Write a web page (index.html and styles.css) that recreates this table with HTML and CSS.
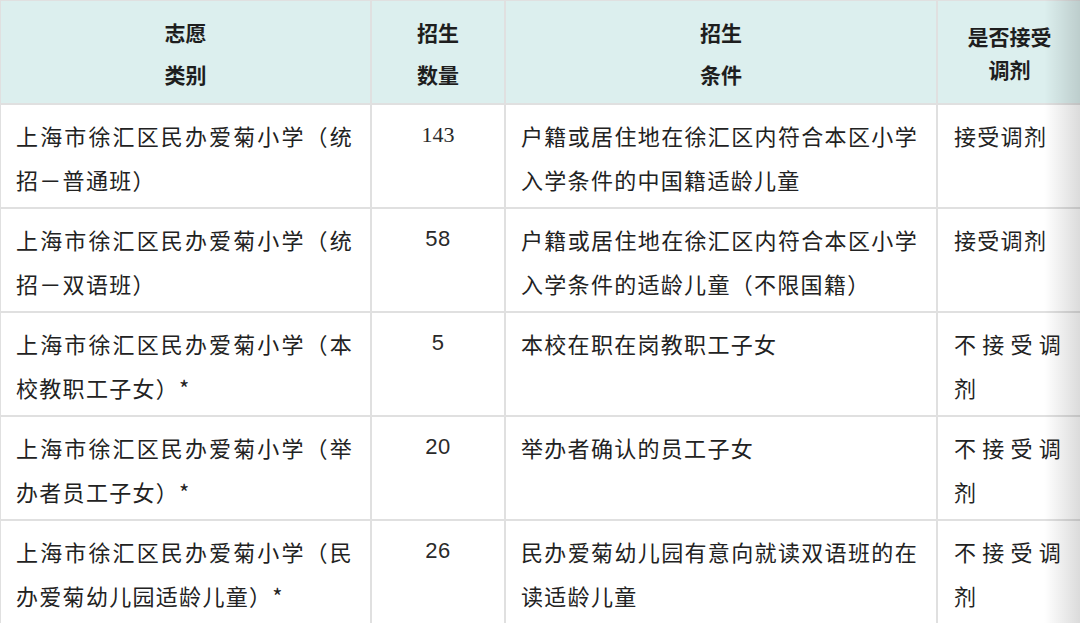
FILE: index.html
```html
<!DOCTYPE html>
<html lang="zh-CN">
<head>
<meta charset="utf-8">
<link rel="stylesheet" href="styles.css">
</head>
<body>
<div class="wrap">
  <table class="quota">
    <colgroup>
      <col class="c1"><col class="c2"><col class="c3"><col class="c4">
    </colgroup>
    <thead>
      <tr>
        <th>志愿<br>类别</th>
        <th>招生<br>数量</th>
        <th>招生<br>条件</th>
        <th class="narrow">是否接受<br>调剂</th>
      </tr>
    </thead>
    <tbody>
      <tr>
        <td>上海市徐汇区民办爱菊小学（统招－普通班）</td>
        <td class="num serif">143</td>
        <td>户籍或居住地在徐汇区内符合本区小学入学条件的中国籍适龄儿童</td>
        <td>接受调剂</td>
      </tr>
      <tr>
        <td>上海市徐汇区民办爱菊小学（统招－双语班）</td>
        <td class="num">58</td>
        <td>户籍或居住地在徐汇区内符合本区小学入学条件的适龄儿童（不限国籍）</td>
        <td>接受调剂</td>
      </tr>
      <tr>
        <td>上海市徐汇区民办爱菊小学（本校教职工子女）*</td>
        <td class="num">5</td>
        <td>本校在职在岗教职工子女</td>
        <td>不接受调剂</td>
      </tr>
      <tr>
        <td>上海市徐汇区民办爱菊小学（举办者员工子女）*</td>
        <td class="num">20</td>
        <td>举办者确认的员工子女</td>
        <td>不接受调剂</td>
      </tr>
      <tr>
        <td>上海市徐汇区民办爱菊小学（民办爱菊幼儿园适龄儿童）*</td>
        <td class="num">26</td>
        <td>民办爱菊幼儿园有意向就读双语班的在读适龄儿童</td>
        <td>不接受调剂</td>
      </tr>
    </tbody>
  </table>
</div>
</body>
</html>
```

FILE: styles.css
```css
html, body {
  margin: 0;
  padding: 0;
  background: #ffffff;
  overflow: hidden;
}
.wrap {
  position: relative;
  width: 1080px;
  height: 623px;
  overflow: hidden;
}
.wrap::after {
  content: "";
  position: absolute;
  top: 0;
  right: 0;
  width: 36px;
  height: 100%;
  background: linear-gradient(to right, rgba(0,0,0,0), rgba(0,0,0,0.14));
  pointer-events: none;
}
.quota {
  border-collapse: collapse;
  table-layout: fixed;
  width: 1082px;
  margin-top: -1px;
  margin-left: -1px;
  font-family: "Noto Sans CJK SC", "Noto Sans", sans-serif;
  color: #222;
}
.c1 { width: 371px; }
.c2 { width: 134px; }
.c3 { width: 432px; }
.c4 { width: 145px; }
.quota th, .quota td {
  border: 2px solid #e0e0e0;
}
.quota th {
  background: #dcefee;
  height: 100px;
  padding: 2px 0 0;
  font-size: 21px;
  font-weight: 700;
  line-height: 42px;
  text-align: center;
  vertical-align: middle;
  color: #1e1e1e;
}
.quota th.narrow {
  line-height: 33px;
}
.quota td {
  height: 89px;
  padding: 8px 17px 5px 15px;
  font-size: 22px;
  letter-spacing: 1.3px;
  line-height: 44px;
  text-align: justify;
  vertical-align: top;
}
.quota td:nth-child(3) {
  padding-left: 15px;
  padding-right: 18px;
}
.quota td:nth-child(4) {
  padding-left: 16px;
  padding-right: 19px;
}
.quota td.num {
  text-align: center;
  font-family: "Liberation Sans", Arial, sans-serif;
  font-size: 22px;
  letter-spacing: 0.5px;
  padding-left: 0;
  padding-right: 0;
  color: #2a2a2a;
}
.quota td.num.serif {
  font-family: "Liberation Serif", "Times New Roman", serif;
  font-size: 22px;
  letter-spacing: 0;
}
```
